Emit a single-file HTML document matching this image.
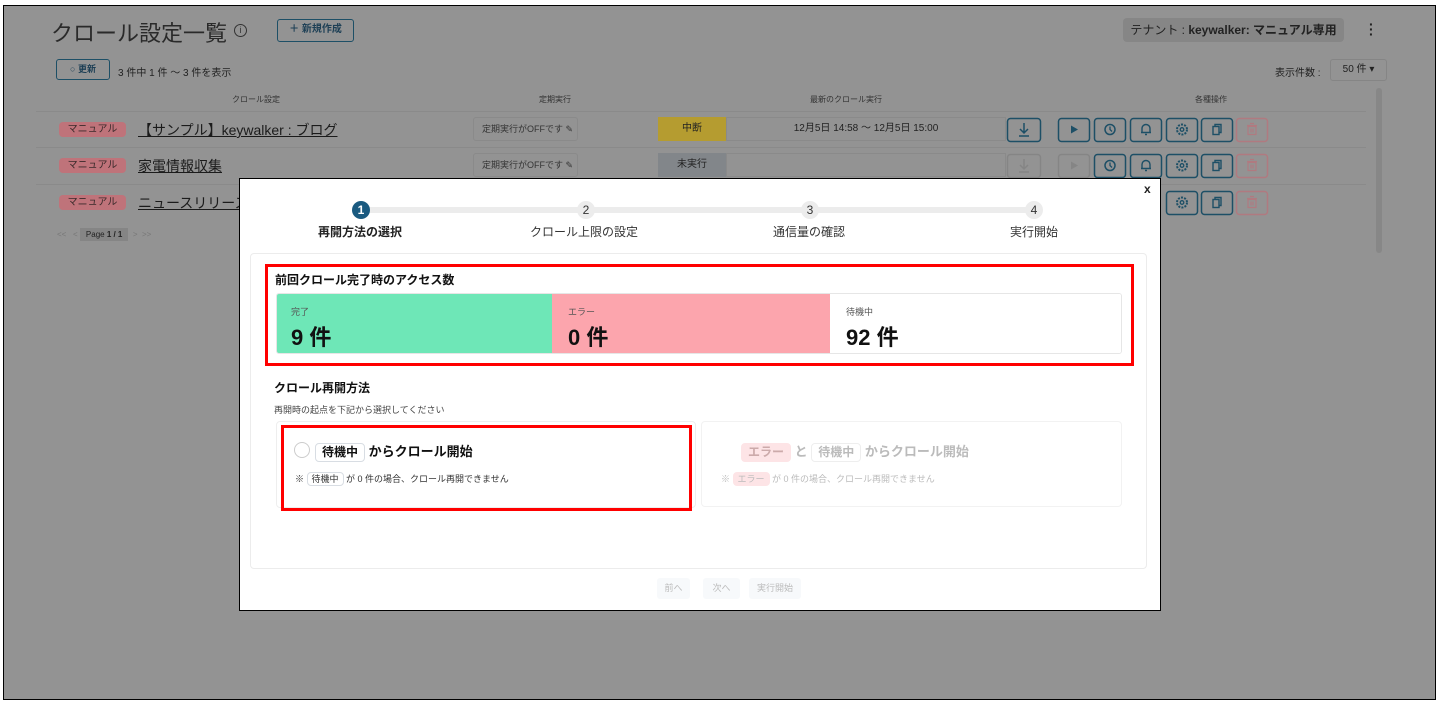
<!DOCTYPE html>
<html><head><meta charset="utf-8"><style>
*{box-sizing:border-box;margin:0;padding:0}
body{width:1439px;height:703px;background:#fff;font-family:"Liberation Sans","Noto Sans CJK JP",sans-serif;position:relative;overflow:hidden;color:#222}
.a{position:absolute}
#page{left:3px;top:5px;width:1433px;height:695px;border:1px solid #000;background:#939393}
.pill{background:#bf737a;color:#3a2a2b;font-size:10px;border-radius:4px;text-align:center;line-height:15px;width:67px;height:15px}
.lnk{font-size:14px;color:#1b1b1b;text-decoration:underline}
.sched{border:1px solid #8a8a8a;border-radius:3px;font-size:9px;color:#333;line-height:22px;padding-left:8px;width:105px;height:24px}
.hr{height:1px;background:#8a8a8a}
.step{width:18px;height:18px;border-radius:50%;background:#ececec;font-size:12px;text-align:center;line-height:18px;color:#333}
.tag{display:inline-block;border:1px solid #d8dde3;border-radius:4px;padding:0 6px;font-size:12px;line-height:17px}
</style></head><body>
<div id="page" class="a"></div>
<div class="a" style="left:51px;top:16px;font-size:22px;color:#2a2a2a">クロール設定一覧</div>
<div class="a" style="left:234px;top:24px;width:13px;height:13px;border:1.3px solid #333;border-radius:50%;font-size:9px;text-align:center;line-height:11px;color:#333">i</div>
<div class="a" style="left:277px;top:19px;width:77px;height:23px;border:1.5px solid #1d4f66;border-radius:3px;font-size:10px;line-height:20px;text-align:center;color:#1d3f55;font-weight:bold">＋ 新規作成</div>
<div class="a" style="left:1123px;top:18px;width:221px;height:24px;background:#868686;border-radius:4px;font-size:12px;line-height:24px;text-align:center;color:#222">テナント : <b>keywalker: マニュアル専用</b></div>
<div class="a" style="left:1369px;top:22px;font-size:14px;font-weight:bold;color:#222;line-height:5px">·<br>·<br>·</div>
<div class="a" style="left:56px;top:59px;width:54px;height:21px;border:1.5px solid #1d4f66;border-radius:3px;font-size:9px;line-height:18px;text-align:center;color:#1d3f55;font-weight:bold">○ 更新</div>
<div class="a" style="left:118px;top:64px;font-size:10px;color:#222">3 件中 1 件 ～ 3 件を表示</div>
<div class="a" style="left:1275px;top:64px;font-size:10px;color:#222">表示件数 :</div>
<div class="a" style="left:1330px;top:59px;width:57px;height:22px;border:1px solid #858585;border-radius:3px;font-size:10px;line-height:20px;text-align:center;color:#222">50 件 ▾</div>
<div class="a" style="left:232px;top:94px;font-size:8px;color:#333">クロール設定</div>
<div class="a" style="left:539px;top:94px;font-size:8px;color:#333">定期実行</div>
<div class="a" style="left:810px;top:94px;font-size:8px;color:#333">最新のクロール実行</div>
<div class="a" style="left:1195px;top:94px;font-size:8px;color:#333">各種操作</div>
<div class="a hr" style="left:36px;top:111px;width:1330px"></div>
<div class="a hr" style="left:36px;top:147px;width:1330px"></div>
<div class="a hr" style="left:36px;top:184px;width:1330px"></div>
<div class="a" style="left:1376px;top:88px;width:6px;height:165px;background:#878787;border-radius:3px"></div>
<div class="a pill" style="left:59px;top:122px">マニュアル</div>
<div class="a lnk" style="left:138px;top:120px">【サンプル】keywalker : ブログ</div>
<div class="a sched" style="left:473px;top:117px">定期実行がOFFです ✎</div>
<div class="a" style="left:658px;top:117px;width:68px;height:24px;background:#b59c30;font-size:10px;line-height:24px;text-align:center;color:#222">中断</div>
<div class="a" style="left:726px;top:117px;width:280px;height:24px;border:1px solid #8a8a8a;font-size:10px;line-height:22px;text-align:center;color:#222">12月5日 14:58 ～ 12月5日 15:00</div>
<div class="a pill" style="left:59px;top:158px">マニュアル</div>
<div class="a lnk" style="left:138px;top:156px">家電情報収集</div>
<div class="a sched" style="left:473px;top:153px">定期実行がOFFです ✎</div>
<div class="a" style="left:658px;top:153px;width:68px;height:24px;background:#82868a;font-size:10px;line-height:24px;text-align:center;color:#222">未実行</div>
<div class="a" style="left:726px;top:153px;width:280px;height:24px;border:1px solid #8a8a8a"></div>
<div class="a pill" style="left:59px;top:195px">マニュアル</div>
<div class="a lnk" style="left:138px;top:193px">ニュースリリース</div>
<div class="a" style="left:57px;top:227px;font-size:8px;color:#777;width:136px;height:15px;line-height:15px">&lt;&lt; &nbsp; &lt; <span style="background:#858585;color:#222;padding:2px 6px">Page <b>1 / 1</b></span> &nbsp;&gt; &nbsp;&gt;&gt;</div>
<svg class="a" style="left:0;top:0" width="1439" height="703">
<g fill="none" stroke-width="1.5">
<rect x="1007.5" y="118.5" width="33" height="23" rx="3" stroke="#1d4f66"/>
<rect x="1007.5" y="154.5" width="33" height="23" rx="3" stroke="#858585"/>
<g stroke="#1d4f66"><path d="M1024 123v9M1020 129l4 4 4-4M1019 136h10"/></g>
<g stroke="#858585"><path d="M1024 159v9M1020 165l4 4 4-4M1019 172h10"/></g>
</g>
<g id="ic"></g>
</svg>
<script>
var xs=[1058,1094,1130,1166,1201,1236],ys=[118,154,191],s='';
ys.forEach(function(y,ri){xs.forEach(function(x,ci){
 if(ri==2&&ci<3)return;
 var c=ci==5?'#b07a80':((ri==1&&ci==0)?'#858585':'#1d4f66');
 var cx=x+16,cy=y+11.5;
 s+='<rect x="'+(x+.5)+'" y="'+(y+.5)+'" width="31" height="23" rx="3" fill="none" stroke="'+c+'" stroke-width="1.5"/>';
 if(ci==0)s+='<path d="M'+(cx-3)+' '+(cy-4)+'l7 4-7 4z" fill="'+c+'"/>';
 if(ci==1)s+='<circle cx="'+cx+'" cy="'+cy+'" r="5" fill="none" stroke="'+c+'" stroke-width="1.5"/><path d="M'+cx+' '+(cy-3)+'v3l2 2" fill="none" stroke="'+c+'" stroke-width="1.3"/>';
 if(ci==2)s+='<path d="M'+(cx-4)+' '+(cy+3)+'v-4a4 4 0 0 1 8 0v4zM'+(cx-5)+' '+(cy+3)+'h10M'+(cx-1)+' '+(cy+5)+'h2" fill="none" stroke="'+c+'" stroke-width="1.4"/>';
 if(ci==3)s+='<circle cx="'+cx+'" cy="'+cy+'" r="5" fill="none" stroke="'+c+'" stroke-width="2" stroke-dasharray="2 1.2"/><circle cx="'+cx+'" cy="'+cy+'" r="1.8" fill="none" stroke="'+c+'" stroke-width="1.3"/>';
 if(ci==4)s+='<rect x="'+(cx-4)+'" y="'+(cy-3)+'" width="6" height="8" fill="none" stroke="'+c+'" stroke-width="1.4"/><path d="M'+(cx-2)+' '+(cy-3)+'v-2h6v8h-2" fill="none" stroke="'+c+'" stroke-width="1.4"/>';
 if(ci==5)s+='<path d="M'+(cx-4)+' '+(cy-3)+'h8v8h-8zM'+(cx-5)+' '+(cy-4)+'h10M'+(cx-2)+' '+(cy-6)+'h4M'+(cx-1)+' '+(cy-1)+'v4M'+(cx+1)+' '+(cy-1)+'v4" fill="none" stroke="'+c+'" stroke-width="1.2"/>';
});});
document.getElementById('ic').innerHTML=s;
</script>
<div class="a" style="left:239px;top:178px;width:922px;height:433px;background:#fff;border:1.5px solid #000"></div>
<div class="a" style="left:1144px;top:182px;font-size:12px;font-weight:bold;color:#222">x</div>
<div class="a" style="left:362px;top:207px;width:672px;height:6px;background:#ececec"></div>
<div class="a step" style="left:352px;top:201px;background:#1a5a80;color:#fff;font-weight:bold">1</div>
<div class="a step" style="left:577px;top:201px">2</div>
<div class="a step" style="left:801px;top:201px">3</div>
<div class="a step" style="left:1025px;top:201px">4</div>
<div class="a" style="left:318px;top:223px;font-size:12px;font-weight:bold;color:#222">再開方法の選択</div>
<div class="a" style="left:530px;top:223px;font-size:12px;color:#333">クロール上限の設定</div>
<div class="a" style="left:773px;top:223px;font-size:12px;color:#333">通信量の確認</div>
<div class="a" style="left:1010px;top:223px;font-size:12px;color:#333">実行開始</div>
<div class="a" style="left:250px;top:253px;width:897px;height:316px;border:1px solid #ececec;border-radius:4px"></div>
<div class="a" style="left:265px;top:264px;width:869px;height:102px;border:3px solid #f00"></div>
<div class="a" style="left:275px;top:271px;font-size:12px;font-weight:bold;color:#111">前回クロール完了時のアクセス数</div>
<div class="a" style="left:276px;top:293px;width:846px;height:61px;border:1px solid #e6e6e6;border-radius:3px;overflow:hidden;display:flex">
<div style="width:275px;background:#6ee7b7;padding:11px 14px"><div style="font-size:9px;color:#555">完了</div><div style="font-size:22px;font-weight:bold;color:#111;margin-top:2px">9 件</div></div>
<div style="width:278px;background:#fca5ad;padding:11px 16px"><div style="font-size:9px;color:#555">エラー</div><div style="font-size:22px;font-weight:bold;color:#111;margin-top:2px">0 件</div></div>
<div style="flex:1;background:#fff;padding:11px 16px"><div style="font-size:9px;color:#555">待機中</div><div style="font-size:22px;font-weight:bold;color:#111;margin-top:2px">92 件</div></div>
</div>
<div class="a" style="left:274px;top:379px;font-size:12px;font-weight:bold;color:#111">クロール再開方法</div>
<div class="a" style="left:274px;top:403px;font-size:9px;color:#444">再開時の起点を下記から選択してください</div>
<div class="a" style="left:276px;top:421px;width:420px;height:87px;border:1px solid #eee;border-radius:4px"></div>
<div class="a" style="left:281px;top:425px;width:411px;height:86px;border:3px solid #f00"></div>
<div class="a" style="left:294px;top:442px;width:16px;height:16px;border:1px solid #ccc;border-radius:50%"></div>
<div class="a" style="left:315px;top:441px;font-size:13px;font-weight:bold;color:#111"><span class="tag" style="font-size:12px">待機中</span> からクロール開始</div>
<div class="a" style="left:295px;top:472px;font-size:9px;color:#333">※ <span class="tag" style="font-size:9px;line-height:12px;padding:0 4px">待機中</span> が 0 件の場合、クロール再開できません</div>
<div class="a" style="left:701px;top:421px;width:421px;height:86px;border:1px solid #f2f2f2;border-radius:4px"></div>
<div class="a" style="left:741px;top:441px;font-size:13px;font-weight:bold;color:#bbb"><span class="tag" style="background:#fde4e6;border-color:#fde4e6;color:#caa">エラー</span> と <span class="tag" style="border-color:#eee">待機中</span> からクロール開始</div>
<div class="a" style="left:721px;top:472px;font-size:9px;color:#bbb">※ <span class="tag" style="font-size:9px;line-height:12px;padding:0 4px;background:#fde4e6;border-color:#fde4e6">エラー</span> が 0 件の場合、クロール再開できません</div>
<div class="a" style="left:657px;top:578px;width:33px;height:21px;background:#f7f9fb;border-radius:3px;font-size:9px;line-height:21px;text-align:center;color:#bbb">前へ</div>
<div class="a" style="left:703px;top:578px;width:37px;height:21px;background:#f7f9fb;border-radius:3px;font-size:9px;line-height:21px;text-align:center;color:#bbb">次へ</div>
<div class="a" style="left:749px;top:578px;width:52px;height:21px;background:#f7f9fb;border-radius:3px;font-size:9px;line-height:21px;text-align:center;color:#bbb">実行開始</div>
</body></html>
